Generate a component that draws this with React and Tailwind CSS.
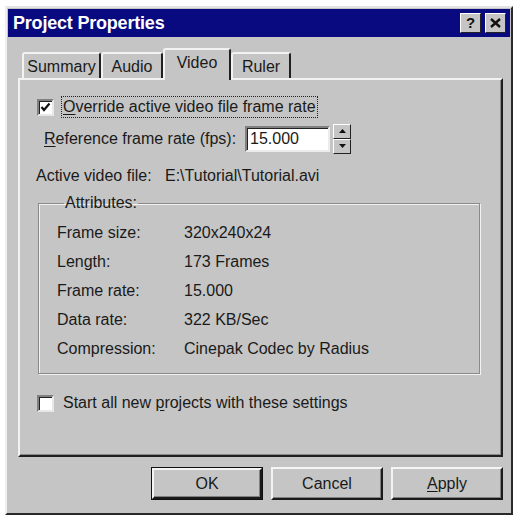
import React from "react";

const font = { fontFamily: '"Liberation Sans", Arial, sans-serif' };

const Checkbox = ({ checked }) => (
  <div className="w-[17px] h-[17px] shrink-0 bg-white border-t-2 border-l-2 border-t-[#808080] border-l-[#808080] border-b-2 border-r-2 border-b-[#e8e8e8] border-r-[#e8e8e8] shadow-[inset_1px_1px_0_#222] flex items-center justify-center">
    {checked ? (
      <svg width="11" height="11" viewBox="0 0 11 11">
        <polyline points="1.5,5 4,8 9.5,1.5" fill="none" stroke="#111" strokeWidth="2.2" />
      </svg>
    ) : null}
  </div>
);

const Tab = ({ label, w, selected }) => (
  <div
    className={`${w} ${
      selected ? "h-[32px] -mb-[2px] relative z-10 pb-[4px]" : "h-[26px] pt-[2px]"
    } flex items-center justify-center bg-[#c5c5c5] border-t-2 border-l-2 border-t-[#f2f2f2] border-l-[#f2f2f2] border-r-2 border-r-[#202020] rounded-t-[3px] text-[16px] text-[#1a1a1a]`}
  >
    {label}
  </div>
);

const Button = ({ children, def }) => (
  <div
    className={`w-[112px] h-[33px] flex items-center justify-center text-[16px] text-[#1a1a1a] bg-[#c5c5c5] ${
      def ? "border border-[#111]" : ""
    }`}
  >
    <div className="w-full h-full flex items-center justify-center border-t-2 border-l-2 border-t-[#f4f4f4] border-l-[#f4f4f4] border-b-2 border-r-2 border-b-[#1a1a1a] border-r-[#1a1a1a] shadow-[inset_-1px_-1px_0_#808080]">
      {children}
    </div>
  </div>
);

const rows = [
  ["Frame size:", "320x240x24"],
  ["Length:", "173 Frames"],
  ["Frame rate:", "15.000"],
  ["Data rate:", "322 KB/Sec"],
  ["Compression:", "Cinepak Codec by Radius"],
];

export default function App() {
  return (
    <div className="w-[515px] h-[517px] bg-white pl-[5px] pt-[6px] overflow-hidden" style={font}>
      <div className="w-[508px] h-[509px] bg-[#c5c5c5] border-t-2 border-l-2 border-t-[#e4e4e4] border-l-[#f0f0f0] border-b-2 border-r-2 border-b-[#2a2a2a] border-r-[#2a2a2a] p-[1px] flex flex-col">
        {/* title bar */}
        <div className="h-[28px] bg-[#0a0a80] flex items-center pl-[5px] pr-[4px]">
          <span className="text-white font-bold text-[18px] tracking-[-0.2px]">Project Properties</span>
          <div className="ml-auto flex gap-[4px]">
            <div className="w-[21px] h-[20px] bg-[#c5c5c5] border-t border-l border-white border-b border-r border-b-[#222] border-r-[#222] flex items-center justify-center font-bold text-[15px] text-[#111]">
              ?
            </div>
            <div className="w-[21px] h-[20px] bg-[#c5c5c5] border-t border-l border-white border-b border-r border-b-[#222] border-r-[#222] flex items-center justify-center">
              <svg width="11" height="10" viewBox="0 0 11 10">
                <path d="M1 1 L10 9 M10 1 L1 9" stroke="#111" strokeWidth="2.4" />
              </svg>
            </div>
          </div>
        </div>

        <div className="pl-[10px] pt-[11px] flex flex-col">
          {/* tabs */}
          <div className="flex items-end h-[30px] pl-[4px]">
            <Tab label="Summary" w="w-[79px]" />
            <Tab label="Audio" w="w-[62px]" />
            <Tab label="Video" w="w-[68px]" selected />
            <Tab label="Ruler" w="w-[60px]" />
          </div>

          {/* panel */}
          <div className="w-[485px] h-[379px] border-t-2 border-l-2 border-t-[#f2f2f2] border-l-[#f2f2f2] border-b-2 border-r-2 border-b-[#202020] border-r-[#202020] shadow-[inset_-1px_-1px_0_#8a8a8a] pl-[17px] flex flex-col text-[16px] text-[#1a1a1a]">
            <div className="mt-[15px] h-[24px] flex items-center gap-[7px]">
              <Checkbox checked />
              <span className="border border-dotted border-[#222] px-[1px] h-[22px] flex items-center">
                <span>
                  <u className="underline-offset-2">O</u>verride active video file frame rate
                </span>
              </span>
            </div>

            <div className="mt-[4px] h-[31px] flex items-center">
              <span className="ml-[7px] w-[201px]">
                <u className="underline-offset-2">R</u>eference frame rate (fps):
              </span>
              <div className="w-[85px] h-[26px] bg-white border-t-2 border-l-2 border-t-[#808080] border-l-[#808080] border-b-2 border-r-2 border-b-[#ececec] border-r-[#ececec] shadow-[inset_1px_1px_0_#222] pl-[3px] flex items-center">
                15.000
              </div>
              <div className="ml-[3px] w-[18px] h-[30px] flex flex-col">
                <div className="h-[15px] bg-[#c5c5c5] border-t border-l border-white border-b border-r border-b-[#222] border-r-[#222] flex items-center justify-center">
                  <svg width="7" height="4" viewBox="0 0 7 4">
                    <polygon points="0,4 7,4 3.5,0" fill="#111" />
                  </svg>
                </div>
                <div className="h-[15px] bg-[#c5c5c5] border-t border-l border-white border-b border-r border-b-[#222] border-r-[#222] flex items-center justify-center">
                  <svg width="7" height="4" viewBox="0 0 7 4">
                    <polygon points="0,0 7,0 3.5,4" fill="#111" />
                  </svg>
                </div>
              </div>
            </div>

            <div className="mt-[12px] h-[20px] flex items-center -ml-[1px]">
              <span className="w-[129px]">Active video file:</span>
              <span>E:\Tutorial\Tutorial.avi</span>
            </div>

            <fieldset className="mt-[8px] ml-[1px] w-[442px] border border-[#8a8a8a] shadow-[inset_1px_1px_0_#f2f2f2,1px_1px_0_#f2f2f2] pl-[18px] pb-[10px] pt-[6px]">
              <legend className="ml-[7px] px-[1px] leading-[18px]">Attributes:</legend>
              {rows.map(([k, v]) => (
                <div key={k} className="h-[29px] flex items-center">
                  <span className="w-[127px]">{k}</span>
                  <span>{v}</span>
                </div>
              ))}
            </fieldset>

            <div className="mt-[17px] h-[24px] flex items-center gap-[9px]">
              <Checkbox />
              <span>
                Start all new <u className="underline-offset-2">p</u>rojects with these settings
              </span>
            </div>
          </div>

          {/* buttons */}
          <div className="w-[485px] mt-[10px] flex justify-end gap-[8px]">
            <Button def>OK</Button>
            <Button>Cancel</Button>
            <Button>
              <span>
                <u className="underline-offset-2">A</u>pply
              </span>
            </Button>
          </div>
        </div>
      </div>
    </div>
  );
}
